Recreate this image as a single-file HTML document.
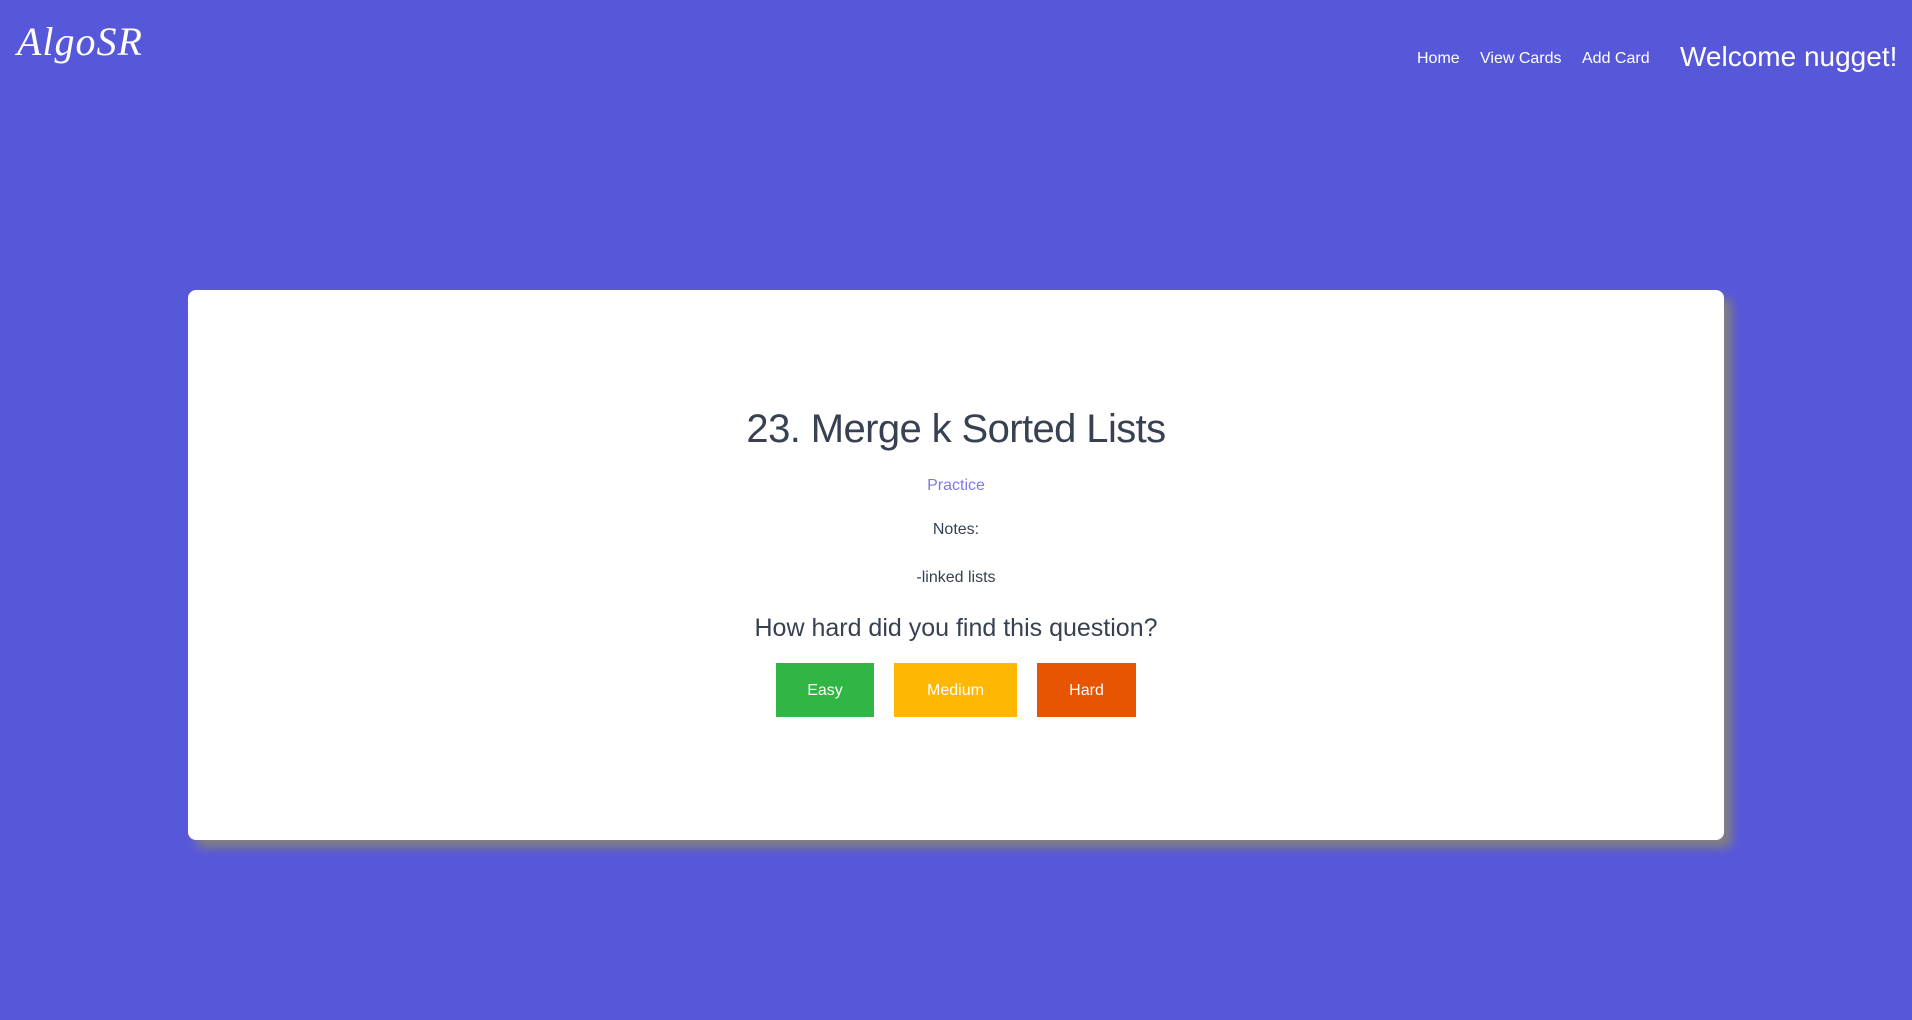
<!DOCTYPE html>
<html><head><meta charset="utf-8"><style>
html,body{margin:0;padding:0;width:1912px;height:1020px;background:#5757da;overflow:hidden;font-family:"Liberation Sans",sans-serif}
.logo{position:absolute;left:17px;top:18px;color:#fff;font-family:"Liberation Serif",serif;font-style:italic;font-size:40px;letter-spacing:1px}
.nav{position:absolute;top:50px;color:#fff;font-size:16px}
.welcome{position:absolute;left:1680px;top:41px;color:#fff;font-size:28px;font-family:"Liberation Sans",sans-serif}
.card{position:absolute;left:188px;top:290px;width:1536px;height:550px;background:#fff;border-radius:8px;box-shadow:8px 8px 10px #808080;text-align:center;color:#374151}
.t{position:absolute;left:0;right:0}
.btn{position:absolute;top:373px;height:54px;line-height:56px;color:#fff;font-size:16px;text-align:center}
</style></head><body>
<div class="logo">AlgoSR</div>
<div class="nav" style="left:1417px">Home</div>
<div class="nav" style="left:1480px">View Cards</div>
<div class="nav" style="left:1582px">Add Card</div>
<div class="welcome">Welcome nugget!</div>
<div class="card">
<div class="t" style="top:117px;font-size:40px;letter-spacing:-0.6px">23. Merge k Sorted Lists</div>
<div class="t" style="top:187px;font-size:16px;color:#7b7be8">Practice</div>
<div class="t" style="top:231px;font-size:16px">Notes:</div>
<div class="t" style="top:279px;font-size:16px">-linked lists</div>
<div class="t" style="top:324px;font-size:25px">How hard did you find this question?</div>
<div class="btn" style="left:588px;width:98px;background:#31b545">Easy</div>
<div class="btn" style="left:706px;width:123px;background:#feb702">Medium</div>
<div class="btn" style="left:849px;width:99px;background:#e85502">Hard</div>
</div>
</body></html>
